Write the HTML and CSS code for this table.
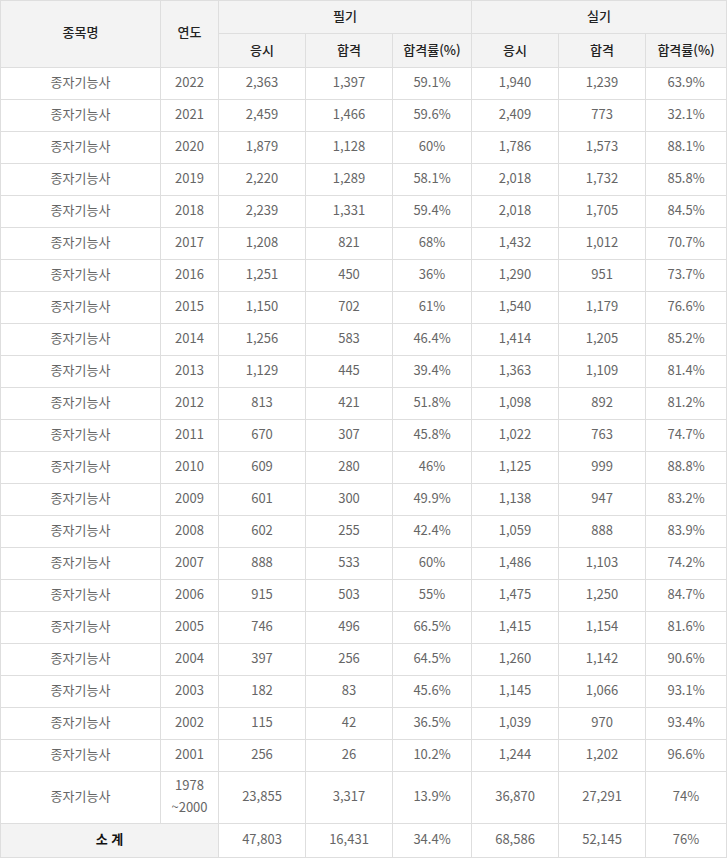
FILE: index.html
```html
<!DOCTYPE html>
<html lang="ko">
<head>
<meta charset="utf-8">
<link rel="stylesheet" href="styles.css">
</head>
<body>
<table class="stats">
<colgroup>
<col class="c-name"><col class="c-year"><col class="c-a"><col class="c-a"><col class="c-r1"><col class="c-a"><col class="c-a"><col class="c-r2">
</colgroup>
<thead>
<tr class="h1"><th rowspan="2" class="span">종목명</th><th rowspan="2" class="span">연도</th><th colspan="3">필기</th><th colspan="3">실기</th></tr>
<tr class="h2"><th>응시</th><th>합격</th><th>합격률(%)</th><th>응시</th><th>합격</th><th>합격률(%)</th></tr>
</thead>
<tbody>
<tr><td>종자기능사</td><td>2022</td><td>2,363</td><td>1,397</td><td>59.1%</td><td>1,940</td><td>1,239</td><td>63.9%</td></tr>
<tr><td>종자기능사</td><td>2021</td><td>2,459</td><td>1,466</td><td>59.6%</td><td>2,409</td><td>773</td><td>32.1%</td></tr>
<tr><td>종자기능사</td><td>2020</td><td>1,879</td><td>1,128</td><td>60%</td><td>1,786</td><td>1,573</td><td>88.1%</td></tr>
<tr><td>종자기능사</td><td>2019</td><td>2,220</td><td>1,289</td><td>58.1%</td><td>2,018</td><td>1,732</td><td>85.8%</td></tr>
<tr><td>종자기능사</td><td>2018</td><td>2,239</td><td>1,331</td><td>59.4%</td><td>2,018</td><td>1,705</td><td>84.5%</td></tr>
<tr><td>종자기능사</td><td>2017</td><td>1,208</td><td>821</td><td>68%</td><td>1,432</td><td>1,012</td><td>70.7%</td></tr>
<tr><td>종자기능사</td><td>2016</td><td>1,251</td><td>450</td><td>36%</td><td>1,290</td><td>951</td><td>73.7%</td></tr>
<tr><td>종자기능사</td><td>2015</td><td>1,150</td><td>702</td><td>61%</td><td>1,540</td><td>1,179</td><td>76.6%</td></tr>
<tr><td>종자기능사</td><td>2014</td><td>1,256</td><td>583</td><td>46.4%</td><td>1,414</td><td>1,205</td><td>85.2%</td></tr>
<tr><td>종자기능사</td><td>2013</td><td>1,129</td><td>445</td><td>39.4%</td><td>1,363</td><td>1,109</td><td>81.4%</td></tr>
<tr><td>종자기능사</td><td>2012</td><td>813</td><td>421</td><td>51.8%</td><td>1,098</td><td>892</td><td>81.2%</td></tr>
<tr><td>종자기능사</td><td>2011</td><td>670</td><td>307</td><td>45.8%</td><td>1,022</td><td>763</td><td>74.7%</td></tr>
<tr><td>종자기능사</td><td>2010</td><td>609</td><td>280</td><td>46%</td><td>1,125</td><td>999</td><td>88.8%</td></tr>
<tr><td>종자기능사</td><td>2009</td><td>601</td><td>300</td><td>49.9%</td><td>1,138</td><td>947</td><td>83.2%</td></tr>
<tr><td>종자기능사</td><td>2008</td><td>602</td><td>255</td><td>42.4%</td><td>1,059</td><td>888</td><td>83.9%</td></tr>
<tr><td>종자기능사</td><td>2007</td><td>888</td><td>533</td><td>60%</td><td>1,486</td><td>1,103</td><td>74.2%</td></tr>
<tr><td>종자기능사</td><td>2006</td><td>915</td><td>503</td><td>55%</td><td>1,475</td><td>1,250</td><td>84.7%</td></tr>
<tr><td>종자기능사</td><td>2005</td><td>746</td><td>496</td><td>66.5%</td><td>1,415</td><td>1,154</td><td>81.6%</td></tr>
<tr><td>종자기능사</td><td>2004</td><td>397</td><td>256</td><td>64.5%</td><td>1,260</td><td>1,142</td><td>90.6%</td></tr>
<tr><td>종자기능사</td><td>2003</td><td>182</td><td>83</td><td>45.6%</td><td>1,145</td><td>1,066</td><td>93.1%</td></tr>
<tr><td>종자기능사</td><td>2002</td><td>115</td><td>42</td><td>36.5%</td><td>1,039</td><td>970</td><td>93.4%</td></tr>
<tr><td>종자기능사</td><td>2001</td><td>256</td><td>26</td><td>10.2%</td><td>1,244</td><td>1,202</td><td>96.6%</td></tr>
<tr class="tall"><td>종자기능사</td><td>1978<br>~2000</td><td>23,855</td><td>3,317</td><td>13.9%</td><td>36,870</td><td>27,291</td><td>74%</td></tr>
<tr class="sum"><th colspan="2">소 계</th><td>47,803</td><td>16,431</td><td>34.4%</td><td>68,586</td><td>52,145</td><td>76%</td></tr>
</tbody>
</table>
</body>
</html>
```
FILE: styles.css
```css
html, body {
  margin: 0;
  padding: 0;
  background: #fff;
}
.stats {
  width: 726px;
  table-layout: fixed;
  border-collapse: collapse;
  font-family: "Noto Sans CJK KR", "Noto Sans", sans-serif;
  font-size: 13px;
  color: #666;
}
.c-name { width: 160px; }
.c-year { width: 58px; }
.c-a { width: 87px; }
.c-r1 { width: 79px; }
.c-r2 { width: 81px; }
.stats th, .stats td {
  border: 1px solid #dedede;
  text-align: center;
  vertical-align: middle;
  padding: 0;
  line-height: 19px;
}
.stats th {
  background: #f3f3f3;
  color: #222;
  font-weight: 500;
}
.stats td {
  height: 27px;
  padding-bottom: 4px;
}
.h1 th { height: 28px; padding-bottom: 4px; }
.h2 th { height: 31px; padding-bottom: 2px; }
.stats .h1 .span { padding-bottom: 6px; }
.stats .tall td { height: 47px; line-height: 22px; }
.stats .sum td, .stats .sum th { height: 29px; padding-bottom: 4px; }
.stats .sum th { font-weight: 700; color: #111; }
```
